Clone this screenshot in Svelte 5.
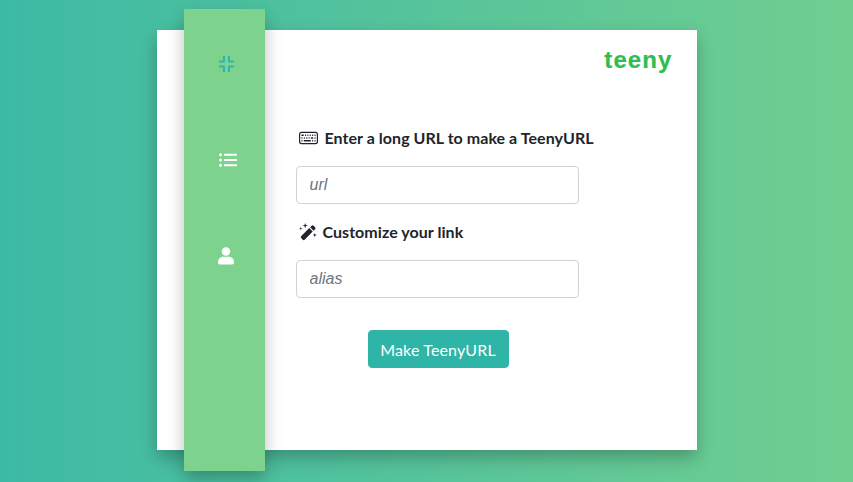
<script>
  const navItems = [
    { name: 'compress', active: true },
    { name: 'list', active: false },
    { name: 'person', active: false }
  ];
</script>

<div class="page">
  <main class="card">
    <nav class="rail">
      {#each navItems as item}
        <div class="nav-item {item.name}" class:active={item.active}>
          {#if item.name === 'compress'}
            <svg viewBox="0 0 15 16" width="15" height="16" fill="none" stroke="currentColor" stroke-width="2"><path d="M5 0v5.500H0M10 0v5.500H15M0 10.500h5V16M15 10.500H10V16"/></svg>
          {:else if item.name === 'list'}
            <svg viewBox="0 0 18 14" width="18" height="14" fill="currentColor"><circle cx="1.500" cy="1.700" r="1.500"/><circle cx="1.500" cy="7" r="1.500"/><circle cx="1.500" cy="12.300" r="1.500"/><rect x="5" y="0.700" width="13" height="2" rx="0.600"/><rect x="5" y="6" width="13" height="2" rx="0.600"/><rect x="5" y="11.300" width="13" height="2" rx="0.600"/></svg>
          {:else}
            <svg viewBox="0 0 16 18" width="16" height="18" fill="currentColor"><circle cx="8" cy="4.500" r="4.300"/><path d="M0 15.500C0 12 2.400 9.800 5 9.800h6c2.600 0 5 2.200 5 5.700 0 1.200-.8 2-2 2H2c-1.200 0-2-.8-2-2z"/></svg>
          {/if}
        </div>
      {/each}
    </nav>

    <header class="brand">teeny</header>

    <form class="form" onsubmit={(e) => e.preventDefault()}>
      <label class="label first" for="url">
        <svg class="kb" viewBox="0 3.500 16 10" width="19" height="14" preserveAspectRatio="none" fill="currentColor"><path d="M14 5a1 1 0 0 1 1 1v5a1 1 0 0 1-1 1H2a1 1 0 0 1-1-1V6a1 1 0 0 1 1-1h12zM2 4a2 2 0 0 0-2 2v5a2 2 0 0 0 2 2h12a2 2 0 0 0 2-2V6a2 2 0 0 0-2-2H2z"/><path d="M13 10.250a.25.25 0 0 1 .25-.25h.5a.25.25 0 0 1 .25.25v.5a.25.25 0 0 1-.25.25h-.5a.25.25 0 0 1-.25-.25v-.5zm0-2a.25.25 0 0 1 .25-.25h.5a.25.25 0 0 1 .25.25v.5a.25.25 0 0 1-.25.25h-.5a.25.25 0 0 1-.25-.25v-.5zm-5 0A.25.25 0 0 1 8.250 8h.5a.25.25 0 0 1 .25.25v.5a.25.25 0 0 1-.25.25h-.5A.25.25 0 0 1 8 8.750v-.5zm2 0a.25.25 0 0 1 .25-.25h1.500a.25.25 0 0 1 .25.25v.5a.25.25 0 0 1-.25.25h-1.500a.25.25 0 0 1-.25-.25v-.5zm1 2a.25.25 0 0 1 .25-.25h.5a.25.25 0 0 1 .25.25v.5a.25.25 0 0 1-.25.25h-.5a.25.25 0 0 1-.25-.25v-.5zm-5-2A.25.25 0 0 1 6.250 8h.5a.25.25 0 0 1 .25.25v.5a.25.25 0 0 1-.25.25h-.5A.25.25 0 0 1 6 8.750v-.5zm-2 0A.25.25 0 0 1 4.250 8h.5a.25.25 0 0 1 .25.25v.5a.25.25 0 0 1-.25.25h-.5A.25.25 0 0 1 4 8.750v-.5zm-2 0A.25.25 0 0 1 2.250 8h.5a.25.25 0 0 1 .25.25v.5a.25.25 0 0 1-.25.25h-.5A.25.25 0 0 1 2 8.750v-.5zm11-2a.25.25 0 0 1 .25-.25h.5a.25.25 0 0 1 .25.25v.5a.25.25 0 0 1-.25.25h-.5a.25.25 0 0 1-.25-.25v-.5zm-2 0a.25.25 0 0 1 .25-.25h.5a.25.25 0 0 1 .25.25v.5a.25.25 0 0 1-.25.25h-.5a.25.25 0 0 1-.25-.25v-.5zm-2 0A.25.25 0 0 1 9.250 6h.5a.25.25 0 0 1 .25.25v.5a.25.25 0 0 1-.25.25h-.5A.25.25 0 0 1 9 6.750v-.5zm-2 0A.25.25 0 0 1 7.250 6h.5a.25.25 0 0 1 .25.25v.5a.25.25 0 0 1-.25.25h-.5A.25.25 0 0 1 7 6.750v-.5zm-2 0A.25.25 0 0 1 5.250 6h.5a.25.25 0 0 1 .25.25v.5a.25.25 0 0 1-.25.25h-.5A.25.25 0 0 1 5 6.750v-.5zm-3 0A.25.25 0 0 1 2.250 6h1.500a.25.25 0 0 1 .25.25v.5a.25.25 0 0 1-.25.25h-1.500A.25.25 0 0 1 2 6.750v-.5zm0 4a.25.25 0 0 1 .25-.25h.5a.25.25 0 0 1 .25.25v.5a.25.25 0 0 1-.25.25h-.5a.25.25 0 0 1-.25-.25v-.5zm2 0a.25.25 0 0 1 .25-.25h5.500a.25.25 0 0 1 .25.25v.5a.25.25 0 0 1-.25.25h-5.500a.25.25 0 0 1-.25-.25v-.5z"/></svg>
        Enter a long URL to make a TeenyURL
      </label>
      <input id="url" type="text" placeholder="url" />

      <label class="label second" for="alias">
        <svg class="wand" viewBox="0 0 16 16" width="18" height="18" fill="currentColor"><path d="M11.200 2.400a1.200 1.200 0 0 1 1.700 0l1.400 1.400a1.200 1.200 0 0 1 0 1.700l-1.300 1.300-3.100-3.100 1.300-1.300zM9.100 4.500l3.100 3.100-7.200 7.200a1.200 1.200 0 0 1-1.700 0l-1.400-1.400a1.200 1.200 0 0 1 0-1.700l7.200-7.200z"/><path d="M5.500 0l.6 1.700 1.700.6-1.700.6-.6 1.700-.6-1.700-1.700-.6 1.700-.6zM1.600 3.500l.4 1.100 1.100.4-1.100.4-.4 1.100-.4-1.100L.1 5l1.100-.4zM14 8.800l.5 1.400 1.400.5-1.400.5-.5 1.400-.5-1.400-1.400-.5 1.400-.5z"/></svg>
        Customize your link
      </label>
      <input id="alias" type="text" placeholder="alias" />

      <button type="submit">Make TeenyURL</button>
    </form>
  </main>
</div>

<style>
  :global(body) {
    margin: 0;
  }
  .page {
    box-sizing: border-box;
    width: 853px;
    height: 482px;
    padding-bottom: 2px;
    display: flex;
    align-items: center;
    justify-content: center;
    background: linear-gradient(90deg, #3dbaa5, #70ce90);
    overflow: hidden;
  }
  .card {
    position: relative;
    box-sizing: border-box;
    width: 540px;
    height: 420px;
    padding: 14px 24px 0 139px;
    background: #fff;
    box-shadow: 0 8px 16px rgba(0, 0, 0, 0.25);
    font-family: "Lato", sans-serif;
    color: #212529;
  }
  .rail {
    position: absolute;
    left: 27px;
    top: -21px;
    width: 81px;
    height: 462px;
    display: flex;
    flex-direction: column;
    align-items: center;
    gap: 77px;
    padding: 45px 0 0 4px;
    box-sizing: border-box;
    background: #7dd38e;
    box-shadow: 0 8px 16px rgba(0, 0, 0, 0.25);
    color: #fff;
  }
  .nav-item {
    height: 19px;
    display: flex;
    align-items: center;
    justify-content: center;
  }
  .nav-item.list {
    margin-left: 3px;
  }
  .nav-item.active {
    color: #2fb6a8;
  }
  .brand {
    text-align: right;
    font-family: "Liberation Sans", sans-serif;
    font-weight: 700;
    font-size: 24px;
    line-height: 32px;
    letter-spacing: 1.1px;
    color: #2dbd50;
    -webkit-text-stroke: 0.2px #2dbd50;
  }
  .form {
    width: 283px;
    display: flex;
    flex-direction: column;
  }
  .label {
    display: flex;
    align-items: center;
    gap: 7px;
    font-size: 16px;
    font-weight: 700;
    letter-spacing: 0.05px;
    line-height: 24px;
    white-space: nowrap;
  }
  .label.first {
    margin-top: 50px;
    padding-left: 3px;
  }
  .label.second {
    margin-top: 16px;
    padding-left: 3px;
    gap: 6px;
  }
  .kb, .wand {
    flex: none;
  }
  input {
    box-sizing: border-box;
    width: 283px;
    height: 38px;
    margin-top: 16px;
    padding: 6px 13px;
    border: 1px solid #ced4da;
    border-radius: 4px;
    font-family: "Liberation Sans", sans-serif;
    font-size: 16px;
    background: #fff;
    outline: none;
  }
  input::placeholder {
    font-style: italic;
    color: #6c757d;
    opacity: 1;
  }
  button {
    align-self: center;
    margin-top: 32px;
    margin-left: 2px;
    width: 141px;
    height: 38px;
    border: 1px solid #2eb5a8;
    border-radius: 4px;
    background: #2eb5a8;
    color: #fff;
    font-family: "Lato", sans-serif;
    font-size: 16px;
    letter-spacing: 0.15px;
    white-space: nowrap;
    padding: 0;
  }
</style>
